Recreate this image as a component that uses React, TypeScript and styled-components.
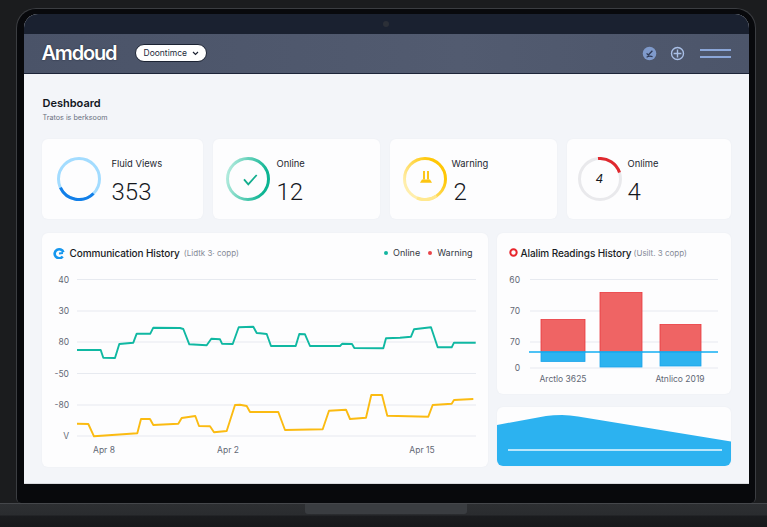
import React from 'react';
import styled, { createGlobalStyle } from 'styled-components';

const teal = [
  [77, 350], [100.7, 350], [103.3, 357.7], [115, 358], [119.3, 344], [133.3, 342.7], [136.7, 333.7], [150.3, 333.7],
  [153.3, 327.7], [180, 328], [183.3, 329], [189.3, 344.3], [206.7, 345.3], [211.3, 338.7], [220, 339.3], [222, 343.7],
  [232.7, 344], [238.7, 327.3], [253.3, 326.7], [256.7, 333], [260, 333.3], [266.7, 334], [271, 346], [295.7, 346],
  [299.3, 334], [305, 334.3], [310, 346], [340, 346], [342.3, 343.7], [352, 344], [354.3, 348], [383.3, 348.3],
  [386, 338.3], [400, 337.7], [411, 336.7], [414, 329.3], [431, 327.3], [437.7, 347.3], [451.7, 347.3], [454, 342.7],
  [475.7, 342.7],
];

const yellow = [
  [77, 423.7], [88.3, 424], [94, 436.3], [137.3, 433.3], [141, 419], [150, 419], [153.3, 425], [178.3, 423.7],
  [181.7, 418], [195.3, 416], [199, 426], [210, 426.3], [214, 432.3], [226.7, 431], [235, 405], [240, 404.7],
  [246.7, 406], [250, 412], [278.3, 412], [285, 430], [322.7, 429.3], [329, 410.7], [346, 409.7], [350, 419],
  [366, 417.7], [371.3, 395], [382, 395], [387.3, 415.7], [428.3, 416.7], [432.7, 405], [451.7, 403.7], [454, 400],
  [473.3, 399],
];

const commGrid = [
  { y: 279.5, label: '40' },
  { y: 311, label: '30' },
  { y: 342, label: '80' },
  { y: 373.5, label: '-50' },
  { y: 405, label: '-80' },
  { y: 436, label: 'V' },
];

const commDates = [
  { x: 104, label: 'Apr 8' },
  { x: 228, label: 'Apr 2' },
  { x: 422, label: 'Apr 15' },
];

const alarmGrid = [
  { y: 279.5, label: '60' },
  { y: 311, label: '70' },
  { y: 342, label: '70' },
  { y: 368, label: '0' },
];

const bars = [
  { x: 541, w: 44, top: 319.5, bottom: 361.5 },
  { x: 600, w: 42, top: 292.5, bottom: 367 },
  { x: 660, w: 41, top: 324.5, bottom: 366 },
];

const toPoints = (list: number[][]) => list.map((p) => p.join(',')).join(' ');

const App: React.FC = () => (
  <Page>
    <GlobalStyle />
    <Laptop>
      <Screen>
        <TopStrip>
          <Camera />
        </TopStrip>
        <Header>
          <Logo>Amdoud</Logo>
          <Dropdown>
            Doontimce
            <svg width="7" height="5" viewBox="0 0 8 6" fill="none" stroke="#1c2333" strokeWidth="1.4">
              <path d="M1 1.2 4 4.2 7 1.2" />
            </svg>
          </Dropdown>
          <HeaderIcons>
            <svg width="15" height="15" viewBox="0 0 15 15" fill="none">
              <circle cx="7.5" cy="7.5" r="6.8" fill="#7f9acb" />
              <path d="M4.6 7.4 6.3 9 10.4 4.8" stroke="#2f3a55" strokeWidth="1.3" />
              <path d="M4.6 11.2C6.5 9.9 8.6 9.9 10.6 10.8" stroke="#2f3a55" strokeWidth="1.1" />
            </svg>
            <svg width="15" height="15" viewBox="0 0 15 15" fill="none" stroke="#a9bfe6">
              <circle cx="7.5" cy="7.5" r="6" strokeWidth="1.4" />
              <path d="M7.5 3.600V11.400M3.600 7.500H11.400" strokeWidth="1.4" />
            </svg>
            <MenuLines>
              <span />
              <span />
            </MenuLines>
          </HeaderIcons>
        </Header>
        <Main>
          <Title>Deshboard</Title>
          <Subtitle>Tratos is berksoom</Subtitle>
          <StatRow>
            <StatCard $width={161} $pad={15} $gap={11}>
              <svg width="44" height="44" viewBox="0 0 44 44" fill="none">
                <circle cx="22" cy="22" r="20.5" stroke="#a3dcff" strokeWidth="3" />
                <path d="M3.4 30.6A20.5 20.5 0 0 0 36.5 36.5" stroke="#127fe8" strokeWidth="3" />
              </svg>
              <StatText>
                <StatLabel>Fluid Views</StatLabel>
                <StatValue>353</StatValue>
              </StatText>
            </StatCard>
            <StatCard $width={167} $pad={13} $gap={7}>
              <svg width="44" height="44" viewBox="0 0 44 44" fill="none">
                <defs>
                  <linearGradient id="tealRing" x1="0" y1="0" x2="1" y2="0.2">
                    <stop offset="0" stopColor="#bdeee2" />
                    <stop offset="1" stopColor="#0cb492" />
                  </linearGradient>
                </defs>
                <circle cx="22" cy="22" r="20.5" stroke="url(#tealRing)" strokeWidth="3" />
                <path d="M18 22.300 22.300 27.300 30.700 18" stroke="#12ad8d" strokeWidth="1.8" />
              </svg>
              <StatText>
                <StatLabel>Online</StatLabel>
                <StatValue>12</StatValue>
              </StatText>
            </StatCard>
            <StatCard $width={167} $pad={13} $gap={5}>
              <svg width="44" height="44" viewBox="0 0 44 44" fill="none">
                <defs>
                  <linearGradient id="yellowRing" x1="0.75" y1="0.2" x2="0.1" y2="0.7">
                    <stop offset="0" stopColor="#ffc707" />
                    <stop offset="1" stopColor="#ffeeac" />
                  </linearGradient>
                </defs>
                <circle cx="22" cy="22" r="20.5" stroke="url(#yellowRing)" strokeWidth="3" />
                <path d="M33.5 39A20.5 20.5 0 0 1 14 41" stroke="#ffe88f" strokeWidth="3" />
                <path d="M21 14V22.500M25 14V22.500" stroke="#fcc512" strokeWidth="1.9" />
                <path d="M19 22.500H27L29 25.700H17Z" fill="#fcc512" />
              </svg>
              <StatText>
                <StatLabel>Warning</StatLabel>
                <StatValue $indent={2}>2</StatValue>
              </StatText>
            </StatCard>
            <StatCard $width={164} $pad={11} $gap={6}>
              <RingWrap>
                <svg width="44" height="44" viewBox="0 0 44 44" fill="none">
                  <circle cx="22" cy="22" r="20.5" stroke="#e9e9ec" strokeWidth="3" />
                  <path d="M20 1.600A20.500 20.500 0 0 1 41.500 15.500" stroke="#e0282e" strokeWidth="3" />
                </svg>
                <RingGlyph>4</RingGlyph>
              </RingWrap>
              <StatText>
                <StatLabel>Onlime</StatLabel>
                <StatValue>4</StatValue>
              </StatText>
            </StatCard>
          </StatRow>
          <ChartGrid>
            <Card>
              <ChartHead>
                <TitleGroup $left={11}>
                  <svg width="12" height="12" viewBox="0 0 12 12" fill="none">
                    <path d="M9.700 9.500A4.500 4.500 0 1 1 10.400 5.200" stroke="#1697ee" strokeWidth="2.6" />
                    <path d="M6 6.400 10 6" stroke="#1697ee" strokeWidth="2" />
                  </svg>
                  <ChartTitle $gap={5}>Communication History</ChartTitle>
                  <ChartNote $gap={4}>(Lidtk 3· copp)</ChartNote>
                </TitleGroup>
                <Legend>
                  <LegendItem $color="#12b5a0">Online</LegendItem>
                  <LegendItem $color="#e8444a">Warning</LegendItem>
                </Legend>
              </ChartHead>
              <ChartSvg width="446" height="194" viewBox="42 273 446 194">
                {commGrid.map((g) => (
                  <g key={g.y}>
                    <GridLine x1="77" x2="476" y1={g.y} y2={g.y} />
                    <AxisText x="69" y={g.y + 3} textAnchor="end">{g.label}</AxisText>
                  </g>
                ))}
                {commDates.map((d) => (
                  <AxisText key={d.x} x={d.x} y="453" textAnchor="middle">{d.label}</AxisText>
                ))}
                <polyline points={toPoints(teal)} fill="none" stroke="#10b8a2" strokeWidth="1.9" strokeLinejoin="round" />
                <polyline points={toPoints(yellow)} fill="none" stroke="#fbbb12" strokeWidth="1.9" strokeLinejoin="round" />
              </ChartSvg>
            </Card>
            <SideColumn>
              <Card>
                <ChartHead>
                  <TitleGroup $left={12}>
                    <svg width="9" height="9" viewBox="0 0 9 9" fill="none">
                      <circle cx="4.5" cy="4.5" r="3.2" stroke="#e8252c" strokeWidth="2" />
                    </svg>
                    <ChartTitle $gap={3}>Alalim Readings History</ChartTitle>
                    <ChartNote $gap={2}>(Usilt. 3 copp)</ChartNote>
                  </TitleGroup>
                </ChartHead>
                <ChartSvg width="234" height="121" viewBox="497 273 234 121">
                  {alarmGrid.map((g, i) => (
                    <g key={i}>
                      <GridLine x1="530" x2="718" y1={g.y} y2={g.y} />
                      <AxisText x="520" y={g.y + 3} textAnchor="end">{g.label}</AxisText>
                    </g>
                  ))}
                  {bars.map((b) => (
                    <g key={b.x}>
                      <rect x={b.x} y={b.top} width={b.w} height={352 - b.top} fill="#ef6464" stroke="#e9383e" strokeWidth="0.8" />
                      <rect x={b.x} y="352" width={b.w} height={b.bottom - 352} fill="#2db3ef" stroke="#1ba4ea" strokeWidth="0.8" />
                    </g>
                  ))}
                  <line x1="529" x2="718" y1="352" y2="352" stroke="#12aef2" strokeWidth="1.6" />
                  <AxisText x="563" y="382" textAnchor="middle">Arctlo 3625</AxisText>
                  <AxisText x="680" y="382" textAnchor="middle">Atnlico 2019</AxisText>
                </ChartSvg>
              </Card>
              <AreaCard>
                <ChartSvg width="234" height="59" viewBox="497 407 234 59">
                  <path d="M497 425 L546 416 Q553 415 562 415 Q570 415 578 416.500 L731 441.500 V466 H497 Z" fill="#2cb2f0" />
                  <line x1="508" x2="722" y1="450" y2="450" stroke="#e8f7ff" strokeWidth="1.3" />
                </ChartSvg>
              </AreaCard>
            </SideColumn>
          </ChartGrid>
        </Main>
      </Screen>
    </Laptop>
    <Base>
      <Hinge />
    </Base>
  </Page>
);

export default App;

const GlobalStyle = createGlobalStyle`
  html, body {
    margin: 0;
    padding: 0;
    background: #1b1c1e;
  }
  body {
    font-family: Inter, "Liberation Sans", sans-serif;
    overflow: hidden;
  }
`;

const Page = styled.div`
  width: 767px;
  height: 527px;
  padding-top: 8px;
  box-sizing: border-box;
  overflow: hidden;
`;

const Laptop = styled.div`
  width: 740px;
  height: 495px;
  margin-left: 16px;
  box-sizing: border-box;
  padding: 4.5px 6.5px 20px 6.5px;
  background: #08090c;
  border: 1.5px solid #3b3d41;
  border-bottom: none;
  border-radius: 20px 20px 5px 5px;
`;

const Screen = styled.div`
  height: 100%;
  display: flex;
  flex-direction: column;
  background: #f3f5f9;
  border-radius: 14px 14px 0 0;
  border-bottom: 1px solid #d9dbdf;
  overflow: hidden;
`;

const TopStrip = styled.div`
  height: 20px;
  flex: none;
  display: flex;
  align-items: center;
  justify-content: center;
  background: #1a2130;
`;

const Camera = styled.div`
  width: 6px;
  height: 6px;
  border-radius: 50%;
  background: #2b2f37;
`;

const Header = styled.div`
  height: 39px;
  flex: none;
  display: flex;
  align-items: center;
  padding: 0 18px;
  background: linear-gradient(90deg, #4a5368, #525b70 60%, #4c556a);
  border-bottom: 1px solid #1c2438;
`;

const Logo = styled.div`
  width: 93px;
  font-size: 20px;
  font-weight: 600;
  letter-spacing: -1.2px;
  color: #fff;
  text-shadow: 0 0 1.5px #161c2c;
`;

const Dropdown = styled.div`
  width: 72px;
  height: 18px;
  box-sizing: border-box;
  display: flex;
  align-items: center;
  justify-content: space-between;
  padding: 0 7px 0 8px;
  font-size: 8.5px;
  color: #232a3b;
  background: #fff;
  border: 1px solid #1c2333;
  border-radius: 9px;
`;

const HeaderIcons = styled.div`
  margin-left: auto;
  display: flex;
  align-items: center;
  gap: 13px;
`;

const MenuLines = styled.div`
  width: 31px;
  margin-left: 2px;
  display: flex;
  flex-direction: column;
  gap: 5px;

  span {
    display: block;
    height: 2px;
    background: #8ba6d8;
  }
`;

const Main = styled.div`
  flex: 1;
  display: flex;
  flex-direction: column;
  padding: 22px 17px 0 18px;
`;

const Title = styled.div`
  font-size: 11px;
  font-weight: 600;
  line-height: 14px;
  margin-left: 1px;
  color: #12151c;
`;

const Subtitle = styled.div`
  font-size: 7.2px;
  line-height: 11px;
  margin: 2px 0 0 1px;
  color: #6a7180;
`;

const StatRow = styled.div`
  display: flex;
  gap: 10px;
  margin-top: 16px;
`;

const Card = styled.div`
  background: #fdfdfe;
  border-radius: 6px;
  box-shadow: 0 0 2px rgba(30, 40, 70, 0.04);
  overflow: hidden;
`;

const StatCard = styled(Card)<{ $width: number; $pad: number; $gap: number }>`
  width: ${(p) => p.$width}px;
  height: 80px;
  box-sizing: border-box;
  display: flex;
  align-items: center;
  gap: ${(p) => p.$gap}px;
  padding-left: ${(p) => p.$pad}px;

  > svg {
    flex: none;
  }
`;

const RingWrap = styled.div`
  position: relative;
  width: 44px;
  height: 44px;
  flex: none;
`;

const RingGlyph = styled.span`
  position: absolute;
  inset: 0;
  display: flex;
  align-items: center;
  justify-content: center;
  font-size: 12px;
  font-style: italic;
  color: #15181f;
`;

const StatText = styled.div`
  display: flex;
  flex-direction: column;
  padding-top: 6px;
`;

const StatLabel = styled.div`
  font-size: 9.4px;
  line-height: 12px;
  color: #23272f;
`;

const StatValue = styled.div<{ $indent?: number }>`
  font-family: Roboto, sans-serif;
  font-size: 24px;
  font-weight: 300;
  line-height: 28px;
  margin: 8px 0 0 ${(p) => p.$indent ?? 0}px;
  color: #14171d;
`;

const ChartGrid = styled.div`
  display: flex;
  gap: 9px;
  margin-top: 14px;
`;

const SideColumn = styled.div`
  display: flex;
  flex-direction: column;
  gap: 13px;
  width: 234px;
`;

const ChartHead = styled.div`
  height: 40px;
  display: flex;
  align-items: center;
  justify-content: space-between;
`;

const TitleGroup = styled.div<{ $left: number }>`
  display: flex;
  align-items: center;
  margin-left: ${(p) => p.$left}px;

  svg {
    flex: none;
  }
`;

const ChartTitle = styled.span<{ $gap: number }>`
  margin-left: ${(p) => p.$gap}px;
  font-size: 10px;
  font-weight: 500;
  letter-spacing: -0.1px;
  color: #191c24;
`;

const ChartNote = styled.span<{ $gap: number }>`
  margin-left: ${(p) => p.$gap}px;
  font-size: 8px;
  color: #858b97;
`;

const Legend = styled.div`
  display: flex;
  gap: 8px;
  margin-right: 15px;
`;

const LegendItem = styled.span<{ $color: string }>`
  display: flex;
  align-items: center;
  font-size: 9px;
  color: #343842;

  &::before {
    content: '';
    width: 4px;
    height: 4px;
    margin-right: 5px;
    border-radius: 50%;
    background: ${(p) => p.$color};
  }
`;

const ChartSvg = styled.svg`
  display: block;
`;

const GridLine = styled.line`
  stroke: #e7eaf0;
  stroke-width: 1.1;
`;

const AxisText = styled.text`
  font-family: Inter, sans-serif;
  font-size: 8.5px;
  fill: #626875;
`;

const AreaCard = styled(Card)`
  height: 59px;
`;

const Base = styled.div`
  height: 24px;
  display: flex;
  align-items: flex-start;
  background: linear-gradient(#2d2f32 0, #2a2c2f 11px, #1b1c1f 12px, #17181a 100%);
  border-top: 1px solid #45474b;
  box-sizing: border-box;
`;

const Hinge = styled.div`
  width: 162px;
  height: 10px;
  margin-left: 305px;
  background: #3a3d41;
  border-radius: 0 0 3px 3px;
`;
